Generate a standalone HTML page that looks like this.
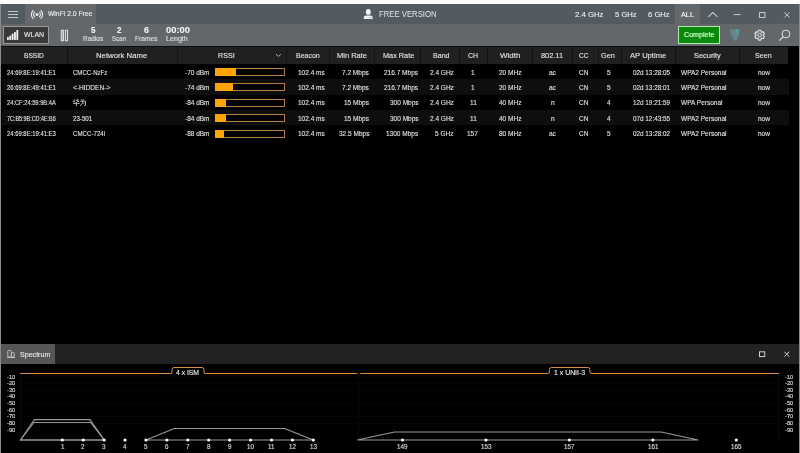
<!DOCTYPE html>
<html><head><meta charset="utf-8"><style>
html,body{margin:0;padding:0;}
body{width:800px;height:453px;overflow:hidden;background:#000;position:relative;font-family:"Liberation Sans",sans-serif;}
</style></head><body>
<div style="position:absolute;left:0;top:0;width:800px;height:453px">
<div style="position:absolute;left:-6px;top:-6px;width:812px;height:10px;background:#fbfbfb;"></div>
<div style="position:absolute;left:0px;top:4px;width:800px;height:20px;background:#535a60;"></div>
<div style="position:absolute;left:1px;top:4px;width:23.5px;height:20px;background:#525b60;"></div>
<div style="position:absolute;left:24.5px;top:4px;width:71.5px;height:20px;background:#65686a;"></div>
<div style="position:absolute;left:675px;top:4px;width:25px;height:20px;background:#65686a;"></div>
<div style="position:absolute;left:0px;top:24px;width:800px;height:22px;background:#63676a;"></div>
<div style="position:absolute;left:1px;top:46px;width:787px;height:18px;background:#202020;"></div>
<div style="position:absolute;left:1px;top:46px;width:787px;height:1px;background:#0c0c0c;"></div>
<div style="position:absolute;left:2px;top:79.35px;width:787px;height:15.35px;background:#0e0e0e;"></div>
<div style="position:absolute;left:2px;top:110.05px;width:787px;height:15.35px;background:#0e0e0e;"></div>
<div style="position:absolute;left:-6px;top:4px;width:7px;height:455px;background:#8c8c8c;"></div>
<div style="position:absolute;left:799px;top:4px;width:7px;height:455px;background:#8c8c8c;"></div>
<div style="position:absolute;left:67px;top:47px;width:1px;height:17px;background:#141414;"></div>
<div style="position:absolute;left:176.5px;top:47px;width:1px;height:17px;background:#141414;"></div>
<div style="position:absolute;left:285.5px;top:47px;width:1px;height:17px;background:#141414;"></div>
<div style="position:absolute;left:329px;top:47px;width:1px;height:17px;background:#141414;"></div>
<div style="position:absolute;left:374px;top:47px;width:1px;height:17px;background:#141414;"></div>
<div style="position:absolute;left:420px;top:47px;width:1px;height:17px;background:#141414;"></div>
<div style="position:absolute;left:459px;top:47px;width:1px;height:17px;background:#141414;"></div>
<div style="position:absolute;left:487px;top:47px;width:1px;height:17px;background:#141414;"></div>
<div style="position:absolute;left:532px;top:47px;width:1px;height:17px;background:#141414;"></div>
<div style="position:absolute;left:572px;top:47px;width:1px;height:17px;background:#141414;"></div>
<div style="position:absolute;left:597.5px;top:47px;width:1px;height:17px;background:#141414;"></div>
<div style="position:absolute;left:621.25px;top:47px;width:1px;height:17px;background:#141414;"></div>
<div style="position:absolute;left:675px;top:47px;width:1px;height:17px;background:#141414;"></div>
<div style="position:absolute;left:738.75px;top:47px;width:1px;height:17px;background:#141414;"></div>
<div style="position:absolute;left:2.75px;top:26px;width:46.5px;height:18px;background:#393939;box-sizing:border-box;border:1px solid #9a9a9a;"></div>
<div style="position:absolute;left:678px;top:26px;width:41.6px;height:18px;background:#0b890b;box-sizing:border-box;border:1px solid #b0ecb0;"></div>
<div style="position:absolute;left:215px;top:68.1px;width:70px;height:8px;background:#000;box-sizing:border-box;border:1px solid #b4803c;"></div>
<div style="position:absolute;left:215px;top:68.1px;width:21px;height:8px;background:#ffa204;"></div>
<div style="position:absolute;left:215px;top:83.44999999999999px;width:70px;height:8px;background:#000;box-sizing:border-box;border:1px solid #b4803c;"></div>
<div style="position:absolute;left:215px;top:83.44999999999999px;width:18.4px;height:8px;background:#ffa204;"></div>
<div style="position:absolute;left:215px;top:98.8px;width:70px;height:8px;background:#000;box-sizing:border-box;border:1px solid #b4803c;"></div>
<div style="position:absolute;left:215px;top:98.8px;width:11.4px;height:8px;background:#ffa204;"></div>
<div style="position:absolute;left:215px;top:114.14999999999999px;width:70px;height:8px;background:#000;box-sizing:border-box;border:1px solid #b4803c;"></div>
<div style="position:absolute;left:215px;top:114.14999999999999px;width:11.4px;height:8px;background:#ffa204;"></div>
<div style="position:absolute;left:215px;top:129.5px;width:70px;height:8px;background:#000;box-sizing:border-box;border:1px solid #b4803c;"></div>
<div style="position:absolute;left:215px;top:129.5px;width:8.8px;height:8px;background:#ffa204;"></div>
<div style="position:absolute;left:1px;top:344px;width:797.5px;height:19.5px;background:#222222;"></div>
<div style="position:absolute;left:1px;top:344px;width:54px;height:19.5px;background:#565656;"></div>
<svg style="position:absolute;left:0;top:0" width="800" height="453" viewBox="0 0 800 453"><line x1="8.1" y1="11.5" x2="18" y2="11.5" stroke="#c4cacd" stroke-width="1"/><line x1="8.1" y1="14.5" x2="18" y2="14.5" stroke="#c4cacd" stroke-width="1"/><line x1="8.1" y1="17.5" x2="18" y2="17.5" stroke="#c4cacd" stroke-width="1"/><circle cx="37" cy="14.5" r="1.5" fill="#e8e8e8"/><path d="M39.19,11.90 A3.4,3.4 0 0 1 39.19,17.10" fill="none" stroke="#f0f0f0" stroke-width="1.1"/><path d="M34.81,11.90 A3.4,3.4 0 0 0 34.81,17.10" fill="none" stroke="#f0f0f0" stroke-width="1.1"/><path d="M40.60,10.21 A5.6,5.6 0 0 1 40.60,18.79" fill="none" stroke="#f0f0f0" stroke-width="1.1"/><path d="M33.40,10.21 A5.6,5.6 0 0 0 33.40,18.79" fill="none" stroke="#f0f0f0" stroke-width="1.1"/><ellipse cx="368.3" cy="11.9" rx="2.5" ry="2.9" fill="#f2f2f2"/><path d="M363.8,19 L363.8,17.6 Q363.8,15.4 366.3,15.4 L370.3,15.4 Q372.7,15.4 372.7,17.6 L372.7,19 Z" fill="#f2f2f2"/><rect x="369.8" y="17.1" width="1.8" height="1" fill="#9a9ea2"/><polyline points="708.3,16.8 712.8,12.6 717.4,16.8" fill="none" stroke="#c4cacd" stroke-width="1.1"/><line x1="733.7" y1="14.6" x2="740.7" y2="14.6" stroke="#c4cacd" stroke-width="1"/><rect x="759.5" y="12.5" width="5.4" height="5" fill="none" stroke="#c4cacd" stroke-width="1"/><path d="M784.3,12.3 L789.5,17.5 M789.5,12.3 L784.3,17.5" stroke="#c4cacd" stroke-width="1"/><rect x="7" y="37.1" width="1.8" height="2.80" fill="#f4f4f4"/><rect x="9.35" y="35.7" width="1.8" height="4.20" fill="#f4f4f4"/><rect x="11.7" y="33.7" width="1.8" height="6.20" fill="#f4f4f4"/><rect x="14.05" y="32.1" width="1.8" height="7.80" fill="#f4f4f4"/><rect x="16.4" y="30" width="1.8" height="9.90" fill="#f4f4f4"/><rect x="61.3" y="30.3" width="2.1" height="10.4" fill="#9a9b9c" stroke="#e6e6e6" stroke-width="1"/><rect x="65.4" y="30.3" width="2.1" height="10.4" fill="none" stroke="#e6e6e6" stroke-width="1"/><path d="M730,29.3 L739.3,29.3 C739.3,34 737.6,41 735.3,41 C733,41 730,34 730,29.3 Z" fill="#62b2b5" fill-opacity="0.42"/><line x1="735.5" y1="29.5" x2="735.5" y2="39.5" stroke="#3f9ea2" stroke-width="1.2"/><path d="M736,29.3 L739.3,29.3 C739.3,31 739,33 738.5,34 L736,34 Z" fill="#52b8bb" fill-opacity="0.45"/><polygon points="758.56,30.31 760.64,30.31 761.35,32.17 763.32,31.85 764.36,33.65 763.10,35.20 764.36,36.75 763.32,38.55 761.35,38.23 760.64,40.09 758.56,40.09 757.85,38.23 755.88,38.55 754.84,36.75 756.10,35.20 754.84,33.65 755.88,31.85 757.85,32.17" fill="none" stroke="#e6e6e6" stroke-width="1.1" stroke-linejoin="round"/><circle cx="759.6" cy="35.2" r="1.8" fill="none" stroke="#e6e6e6" stroke-width="1"/><circle cx="785.9" cy="34" r="3.9" fill="none" stroke="#e2e2e2" stroke-width="1"/><line x1="783.1" y1="36.9" x2="779.2" y2="40.6" stroke="#e2e2e2" stroke-width="1.1"/><rect x="7.8" y="350.4" width="3.6" height="6.6" rx="1" fill="none" stroke="#c8c8c8" stroke-width="0.9"/><rect x="11.4" y="352.5" width="2.9" height="4.5" rx="1" fill="none" stroke="#c8c8c8" stroke-width="0.9"/><line x1="7" y1="357.6" x2="15" y2="357.6" stroke="#c8c8c8" stroke-width="0.9"/><rect x="759.5" y="351.8" width="5.2" height="4.8" fill="none" stroke="#d0d0d0" stroke-width="1"/><path d="M784.3,351.7 L789.3,356.7 M789.3,351.7 L784.3,356.7" stroke="#d0d0d0" stroke-width="1"/><polyline points="276,54.2 278.4,56.4 280.8,54.2" fill="none" stroke="#b0b0b0" stroke-width="1"/><path d="M74.9,99.3 L73.3,101.8 M74.2,100.8 L74.2,102.5 M76.2,100.6 L78.6,99.9 M77.4,99.2 L77.4,101.5 L79.3,101.5 M73.1,103.4 L79.7,103.4 M76.4,102.2 L76.4,106.1" fill="none" stroke="#d6d6d6" stroke-width="0.85"/><path d="M81.2,99.3 L81.8,100.2 M80.2,101.2 L85.6,101.2 L85.3,105.5 L84.3,105.8 M83.2,99.1 L82.6,102.8 L80.1,105.9 M83.4,103 L84.1,103.9" fill="none" stroke="#d6d6d6" stroke-width="0.85"/><line x1="20" y1="377.00" x2="357" y2="377.00" stroke="#070707" stroke-width="1"/><line x1="360.5" y1="377.00" x2="778" y2="377.00" stroke="#070707" stroke-width="1"/><line x1="20" y1="383.63" x2="357" y2="383.63" stroke="#070707" stroke-width="1"/><line x1="360.5" y1="383.63" x2="778" y2="383.63" stroke="#070707" stroke-width="1"/><line x1="20" y1="390.26" x2="357" y2="390.26" stroke="#070707" stroke-width="1"/><line x1="360.5" y1="390.26" x2="778" y2="390.26" stroke="#070707" stroke-width="1"/><line x1="20" y1="396.89" x2="357" y2="396.89" stroke="#070707" stroke-width="1"/><line x1="360.5" y1="396.89" x2="778" y2="396.89" stroke="#070707" stroke-width="1"/><line x1="20" y1="403.52" x2="357" y2="403.52" stroke="#070707" stroke-width="1"/><line x1="360.5" y1="403.52" x2="778" y2="403.52" stroke="#070707" stroke-width="1"/><line x1="20" y1="410.15" x2="357" y2="410.15" stroke="#070707" stroke-width="1"/><line x1="360.5" y1="410.15" x2="778" y2="410.15" stroke="#070707" stroke-width="1"/><line x1="20" y1="416.78" x2="357" y2="416.78" stroke="#070707" stroke-width="1"/><line x1="360.5" y1="416.78" x2="778" y2="416.78" stroke="#070707" stroke-width="1"/><line x1="20" y1="423.41" x2="357" y2="423.41" stroke="#070707" stroke-width="1"/><line x1="360.5" y1="423.41" x2="778" y2="423.41" stroke="#070707" stroke-width="1"/><line x1="20" y1="430.04" x2="357" y2="430.04" stroke="#070707" stroke-width="1"/><line x1="360.5" y1="430.04" x2="778" y2="430.04" stroke="#070707" stroke-width="1"/><line x1="20.5" y1="373" x2="20.5" y2="440" stroke="#0b0b0b" stroke-width="1"/><line x1="358.5" y1="373" x2="358.5" y2="440" stroke="#0b0b0b" stroke-width="1"/><line x1="778.5" y1="373" x2="778.5" y2="440" stroke="#0b0b0b" stroke-width="1"/><path d="M20,373.5 L171,373.5 Q172,373.5 172,372 L172,369.5 Q172,367.5 174,367.5 L202,367.5 Q204,367.5 204,369.5 L204,372 Q204,373.5 205,373.5 L357.3,373.5" fill="none" stroke="#d88c40" stroke-width="1"/><path d="M360.3,373.5 L548.4,373.5 Q549.4,373.5 549.4,372 L549.4,369.5 Q549.4,367.5 551.4,367.5 L587.9,367.5 Q589.9,367.5 589.9,369.5 L589.9,372 Q589.9,373.5 590.9,373.5 L779,373.5" fill="none" stroke="#d88c40" stroke-width="1"/><polygon points="20.5,440 34.4,419.6 90,419.6 104.2,440" fill="none" stroke="#9a9a9a" stroke-width="1.1"/><polygon points="20.5,440 33.8,422.5 90.6,422.5 104.2,440" fill="none" stroke="#9a9a9a" stroke-width="1.1"/><polygon points="146,440 174.2,428.5 284.6,428.5 313.3,440" fill="none" stroke="#9a9a9a" stroke-width="1.1"/><polygon points="357.3,440 394.4,432 661.1,432 698.3,440" fill="none" stroke="#9a9a9a" stroke-width="1.1"/><circle cx="62.30" cy="440" r="1.6" fill="#ffffff"/><circle cx="83.22" cy="440" r="1.6" fill="#ffffff"/><circle cx="104.14" cy="440" r="1.6" fill="#ffffff"/><circle cx="125.06" cy="440" r="1.6" fill="#ffffff"/><circle cx="145.98" cy="440" r="1.6" fill="#ffffff"/><circle cx="166.90" cy="440" r="1.6" fill="#ffffff"/><circle cx="187.82" cy="440" r="1.6" fill="#ffffff"/><circle cx="208.74" cy="440" r="1.6" fill="#ffffff"/><circle cx="229.66" cy="440" r="1.6" fill="#ffffff"/><circle cx="250.58" cy="440" r="1.6" fill="#ffffff"/><circle cx="271.50" cy="440" r="1.6" fill="#ffffff"/><circle cx="292.42" cy="440" r="1.6" fill="#ffffff"/><circle cx="313.34" cy="440" r="1.6" fill="#ffffff"/><circle cx="402.50" cy="440" r="1.6" fill="#ffffff"/><circle cx="485.95" cy="440" r="1.6" fill="#ffffff"/><circle cx="569.40" cy="440" r="1.6" fill="#ffffff"/><circle cx="652.85" cy="440" r="1.6" fill="#ffffff"/><circle cx="736.30" cy="440" r="1.6" fill="#ffffff"/></svg>
<div style="position:absolute;left:0;top:0;width:800px;height:453px;will-change:transform">
<div style="position:absolute;left:47.50px;top:11.36px;font:400 6.5px/1 'Liberation Sans',sans-serif;color:#f0f0f0;white-space:pre;-webkit-text-stroke:0.1px #f0f0f0;transform-origin:0 0;transform:scaleX(1.039)">WinFi 2.0 Free</div>
<div style="position:absolute;left:379.40px;top:8.90px;font:400 9.4px/1 'Liberation Sans',sans-serif;color:#e4e6e8;white-space:pre;-webkit-text-stroke:0px #e4e6e8;transform-origin:0 0;transform:scaleX(0.824)">FREE VERSION</div>
<div style="position:absolute;left:574.70px;top:10.85px;font:400 7.8px/1 'Liberation Sans',sans-serif;color:#f0f0f0;white-space:pre;-webkit-text-stroke:0.1px #f0f0f0;transform-origin:0 0;transform:scaleX(0.996)">2.4 GHz</div>
<div style="position:absolute;left:614.50px;top:10.85px;font:400 7.8px/1 'Liberation Sans',sans-serif;color:#f0f0f0;white-space:pre;-webkit-text-stroke:0.1px #f0f0f0;transform-origin:0 0;transform:scaleX(0.981)">5 GHz</div>
<div style="position:absolute;left:647.50px;top:10.85px;font:400 7.8px/1 'Liberation Sans',sans-serif;color:#f0f0f0;white-space:pre;-webkit-text-stroke:0.1px #f0f0f0;transform-origin:0 0;transform:scaleX(0.981)">6 GHz</div>
<div style="position:absolute;left:681.40px;top:10.85px;font:400 7.8px/1 'Liberation Sans',sans-serif;color:#ffffff;white-space:pre;-webkit-text-stroke:0.1px #ffffff;transform-origin:0 0;transform:scaleX(0.937)">ALL</div>
<div style="position:absolute;left:23.75px;top:31.15px;font:400 7.8px/1 'Liberation Sans',sans-serif;color:#f0f0f0;white-space:pre;-webkit-text-stroke:0.1px #f0f0f0;transform-origin:0 0;transform:scaleX(0.888)">WLAN</div>
<div style="position:absolute;left:90.50px;top:27.29px;font:700 8.2px/1 'Liberation Sans',sans-serif;color:#f4f4f4;white-space:pre;-webkit-text-stroke:0.1px #f4f4f4;transform-origin:0 0;transform:scaleX(0.986)">5</div>
<div style="position:absolute;left:83.00px;top:36.21px;font:400 6.8px/1 'Liberation Sans',sans-serif;color:#e0e0e0;white-space:pre;-webkit-text-stroke:0.1px #e0e0e0;transform-origin:0 0;transform:scaleX(0.954)">Radios</div>
<div style="position:absolute;left:116.70px;top:27.29px;font:700 8.2px/1 'Liberation Sans',sans-serif;color:#f4f4f4;white-space:pre;-webkit-text-stroke:0.1px #f4f4f4;transform-origin:0 0;transform:scaleX(0.986)">2</div>
<div style="position:absolute;left:111.50px;top:36.21px;font:400 6.8px/1 'Liberation Sans',sans-serif;color:#e0e0e0;white-space:pre;-webkit-text-stroke:0.1px #e0e0e0;transform-origin:0 0;transform:scaleX(0.916)">Scan</div>
<div style="position:absolute;left:143.70px;top:27.29px;font:700 8.2px/1 'Liberation Sans',sans-serif;color:#f4f4f4;white-space:pre;-webkit-text-stroke:0.1px #f4f4f4;transform-origin:0 0;transform:scaleX(1.096)">6</div>
<div style="position:absolute;left:134.70px;top:36.21px;font:400 6.8px/1 'Liberation Sans',sans-serif;color:#e0e0e0;white-space:pre;-webkit-text-stroke:0.1px #e0e0e0;transform-origin:0 0;transform:scaleX(0.976)">Frames</div>
<div style="position:absolute;left:165.50px;top:27.29px;font:700 8.2px/1 'Liberation Sans',sans-serif;color:#f4f4f4;white-space:pre;-webkit-text-stroke:0.1px #f4f4f4;transform-origin:0 0;transform:scaleX(1.141)">00:00</div>
<div style="position:absolute;left:166.20px;top:36.21px;font:400 6.8px/1 'Liberation Sans',sans-serif;color:#e0e0e0;white-space:pre;-webkit-text-stroke:0.1px #e0e0e0;transform-origin:0 0;transform:scaleX(1.048)">Length</div>
<div style="position:absolute;left:683.80px;top:30.95px;font:400 7.8px/1 'Liberation Sans',sans-serif;color:#c8ffc8;white-space:pre;-webkit-text-stroke:0.2px #c8ffc8;transform-origin:0 0;transform:scaleX(0.914)">Complete</div>
<div style="position:absolute;left:24.30px;top:51.85px;font:400 7.8px/1 'Liberation Sans',sans-serif;color:#e8e8e8;white-space:pre;-webkit-text-stroke:0.1px #e8e8e8;transform-origin:0 0;transform:scaleX(0.850)">BSSID</div>
<div style="position:absolute;left:95.90px;top:51.85px;font:400 7.8px/1 'Liberation Sans',sans-serif;color:#e8e8e8;white-space:pre;-webkit-text-stroke:0.1px #e8e8e8;transform-origin:0 0;transform:scaleX(0.993)">Network Name</div>
<div style="position:absolute;left:218.10px;top:51.85px;font:400 7.8px/1 'Liberation Sans',sans-serif;color:#e8e8e8;white-space:pre;-webkit-text-stroke:0.1px #e8e8e8;transform-origin:0 0;transform:scaleX(0.917)">RSSI</div>
<div style="position:absolute;left:296.25px;top:51.85px;font:400 7.8px/1 'Liberation Sans',sans-serif;color:#e8e8e8;white-space:pre;-webkit-text-stroke:0.1px #e8e8e8;transform-origin:0 0;transform:scaleX(0.898)">Beacon</div>
<div style="position:absolute;left:337.00px;top:51.85px;font:400 7.8px/1 'Liberation Sans',sans-serif;color:#e8e8e8;white-space:pre;-webkit-text-stroke:0.1px #e8e8e8;transform-origin:0 0;transform:scaleX(0.961)">Min Rate</div>
<div style="position:absolute;left:383.00px;top:51.85px;font:400 7.8px/1 'Liberation Sans',sans-serif;color:#e8e8e8;white-space:pre;-webkit-text-stroke:0.1px #e8e8e8;transform-origin:0 0;transform:scaleX(0.936)">Max Rate</div>
<div style="position:absolute;left:433.00px;top:51.85px;font:400 7.8px/1 'Liberation Sans',sans-serif;color:#e8e8e8;white-space:pre;-webkit-text-stroke:0.1px #e8e8e8;transform-origin:0 0;transform:scaleX(0.906)">Band</div>
<div style="position:absolute;left:467.50px;top:51.85px;font:400 7.8px/1 'Liberation Sans',sans-serif;color:#e8e8e8;white-space:pre;-webkit-text-stroke:0.1px #e8e8e8;transform-origin:0 0;transform:scaleX(0.888)">CH</div>
<div style="position:absolute;left:499.50px;top:51.85px;font:400 7.8px/1 'Liberation Sans',sans-serif;color:#e8e8e8;white-space:pre;-webkit-text-stroke:0.1px #e8e8e8;transform-origin:0 0;transform:scaleX(1.028)">Width</div>
<div style="position:absolute;left:540.50px;top:51.85px;font:400 7.8px/1 'Liberation Sans',sans-serif;color:#e8e8e8;white-space:pre;-webkit-text-stroke:0.1px #e8e8e8;transform-origin:0 0;transform:scaleX(0.945)">802.11</div>
<div style="position:absolute;left:578.75px;top:51.85px;font:400 7.8px/1 'Liberation Sans',sans-serif;color:#e8e8e8;white-space:pre;-webkit-text-stroke:0.1px #e8e8e8;transform-origin:0 0;transform:scaleX(0.843)">CC</div>
<div style="position:absolute;left:601.25px;top:51.85px;font:400 7.8px/1 'Liberation Sans',sans-serif;color:#e8e8e8;white-space:pre;-webkit-text-stroke:0.1px #e8e8e8;transform-origin:0 0;transform:scaleX(0.932)">Gen</div>
<div style="position:absolute;left:630.00px;top:51.85px;font:400 7.8px/1 'Liberation Sans',sans-serif;color:#e8e8e8;white-space:pre;-webkit-text-stroke:0.1px #e8e8e8;transform-origin:0 0;transform:scaleX(0.976)">AP Uptime</div>
<div style="position:absolute;left:693.75px;top:51.85px;font:400 7.8px/1 'Liberation Sans',sans-serif;color:#e8e8e8;white-space:pre;-webkit-text-stroke:0.1px #e8e8e8;transform-origin:0 0;transform:scaleX(0.950)">Security</div>
<div style="position:absolute;left:754.50px;top:51.85px;font:400 7.8px/1 'Liberation Sans',sans-serif;color:#e8e8e8;white-space:pre;-webkit-text-stroke:0.1px #e8e8e8;transform-origin:0 0;transform:scaleX(0.919)">Seen</div>
<div style="position:absolute;left:6.75px;top:68.58px;font:400 7.0px/1 'Liberation Sans',sans-serif;color:#e6e6e6;white-space:pre;-webkit-text-stroke:0.1px #e6e6e6;transform-origin:0 0;transform:scaleX(0.841)">24:69:8E:19:41:E1</div>
<div style="position:absolute;left:72.90px;top:68.58px;font:400 7.0px/1 'Liberation Sans',sans-serif;color:#e6e6e6;white-space:pre;-webkit-text-stroke:0.1px #e6e6e6;transform-origin:0 0;transform:scaleX(0.865)">CMCC-NzFz</div>
<div style="position:absolute;left:185.30px;top:68.58px;font:400 7.0px/1 'Liberation Sans',sans-serif;color:#e6e6e6;white-space:pre;-webkit-text-stroke:0.1px #e6e6e6;transform-origin:0 0;transform:scaleX(0.926)">-70 dBm</div>
<div style="position:absolute;left:298.12px;top:68.58px;font:400 7.0px/1 'Liberation Sans',sans-serif;color:#e6e6e6;white-space:pre;-webkit-text-stroke:0.1px #e6e6e6;transform-origin:0 0;transform:scaleX(0.930)">102.4 ms</div>
<div style="position:absolute;left:342.42px;top:68.58px;font:400 7.0px/1 'Liberation Sans',sans-serif;color:#e6e6e6;white-space:pre;-webkit-text-stroke:0.1px #e6e6e6;transform-origin:0 0;transform:scaleX(0.930)">7.2 Mbps</div>
<div style="position:absolute;left:384.37px;top:68.58px;font:400 7.0px/1 'Liberation Sans',sans-serif;color:#e6e6e6;white-space:pre;-webkit-text-stroke:0.1px #e6e6e6;transform-origin:0 0;transform:scaleX(0.930)">216.7 Mbps</div>
<div style="position:absolute;left:430.01px;top:68.58px;font:400 7.0px/1 'Liberation Sans',sans-serif;color:#e6e6e6;white-space:pre;-webkit-text-stroke:0.1px #e6e6e6;transform-origin:0 0;transform:scaleX(0.930)">2.4 GHz</div>
<div style="position:absolute;left:471.08px;top:68.58px;font:400 7.0px/1 'Liberation Sans',sans-serif;color:#e6e6e6;white-space:pre;-webkit-text-stroke:0.1px #e6e6e6;transform-origin:0 0;transform:scaleX(0.930)">1</div>
<div style="position:absolute;left:498.78px;top:68.58px;font:400 7.0px/1 'Liberation Sans',sans-serif;color:#e6e6e6;white-space:pre;-webkit-text-stroke:0.1px #e6e6e6;transform-origin:0 0;transform:scaleX(0.930)">20 MHz</div>
<div style="position:absolute;left:549.06px;top:68.58px;font:400 7.0px/1 'Liberation Sans',sans-serif;color:#e6e6e6;white-space:pre;-webkit-text-stroke:0.1px #e6e6e6;transform-origin:0 0;transform:scaleX(0.930)">ac</div>
<div style="position:absolute;left:578.99px;top:68.58px;font:400 7.0px/1 'Liberation Sans',sans-serif;color:#e6e6e6;white-space:pre;-webkit-text-stroke:0.1px #e6e6e6;transform-origin:0 0;transform:scaleX(0.930)">CN</div>
<div style="position:absolute;left:606.68px;top:68.58px;font:400 7.0px/1 'Liberation Sans',sans-serif;color:#e6e6e6;white-space:pre;-webkit-text-stroke:0.1px #e6e6e6;transform-origin:0 0;transform:scaleX(0.930)">5</div>
<div style="position:absolute;left:633.00px;top:68.58px;font:400 7.0px/1 'Liberation Sans',sans-serif;color:#e6e6e6;white-space:pre;-webkit-text-stroke:0.1px #e6e6e6;transform-origin:0 0;transform:scaleX(0.905)">02d 13:28:05</div>
<div style="position:absolute;left:681.30px;top:68.58px;font:400 7.0px/1 'Liberation Sans',sans-serif;color:#e6e6e6;white-space:pre;-webkit-text-stroke:0.1px #e6e6e6;transform-origin:0 0;transform:scaleX(0.930)">WPA2 Personal</div>
<div style="position:absolute;left:757.63px;top:68.58px;font:400 7.0px/1 'Liberation Sans',sans-serif;color:#e6e6e6;white-space:pre;-webkit-text-stroke:0.1px #e6e6e6;transform-origin:0 0;transform:scaleX(0.930)">now</div>
<div style="position:absolute;left:6.75px;top:83.93px;font:400 7.0px/1 'Liberation Sans',sans-serif;color:#e6e6e6;white-space:pre;-webkit-text-stroke:0.1px #e6e6e6;transform-origin:0 0;transform:scaleX(0.841)">26:69:8E:49:41:E1</div>
<div style="position:absolute;left:72.90px;top:83.93px;font:400 7.0px/1 'Liberation Sans',sans-serif;color:#e6e6e6;white-space:pre;-webkit-text-stroke:0.1px #e6e6e6;transform-origin:0 0;transform:scaleX(0.940)">&lt;-HIDDEN-&gt;</div>
<div style="position:absolute;left:185.30px;top:83.93px;font:400 7.0px/1 'Liberation Sans',sans-serif;color:#e6e6e6;white-space:pre;-webkit-text-stroke:0.1px #e6e6e6;transform-origin:0 0;transform:scaleX(0.926)">-74 dBm</div>
<div style="position:absolute;left:298.12px;top:83.93px;font:400 7.0px/1 'Liberation Sans',sans-serif;color:#e6e6e6;white-space:pre;-webkit-text-stroke:0.1px #e6e6e6;transform-origin:0 0;transform:scaleX(0.930)">102.4 ms</div>
<div style="position:absolute;left:342.42px;top:83.93px;font:400 7.0px/1 'Liberation Sans',sans-serif;color:#e6e6e6;white-space:pre;-webkit-text-stroke:0.1px #e6e6e6;transform-origin:0 0;transform:scaleX(0.930)">7.2 Mbps</div>
<div style="position:absolute;left:384.37px;top:83.93px;font:400 7.0px/1 'Liberation Sans',sans-serif;color:#e6e6e6;white-space:pre;-webkit-text-stroke:0.1px #e6e6e6;transform-origin:0 0;transform:scaleX(0.930)">216.7 Mbps</div>
<div style="position:absolute;left:430.01px;top:83.93px;font:400 7.0px/1 'Liberation Sans',sans-serif;color:#e6e6e6;white-space:pre;-webkit-text-stroke:0.1px #e6e6e6;transform-origin:0 0;transform:scaleX(0.930)">2.4 GHz</div>
<div style="position:absolute;left:471.08px;top:83.93px;font:400 7.0px/1 'Liberation Sans',sans-serif;color:#e6e6e6;white-space:pre;-webkit-text-stroke:0.1px #e6e6e6;transform-origin:0 0;transform:scaleX(0.930)">1</div>
<div style="position:absolute;left:498.78px;top:83.93px;font:400 7.0px/1 'Liberation Sans',sans-serif;color:#e6e6e6;white-space:pre;-webkit-text-stroke:0.1px #e6e6e6;transform-origin:0 0;transform:scaleX(0.930)">20 MHz</div>
<div style="position:absolute;left:549.06px;top:83.93px;font:400 7.0px/1 'Liberation Sans',sans-serif;color:#e6e6e6;white-space:pre;-webkit-text-stroke:0.1px #e6e6e6;transform-origin:0 0;transform:scaleX(0.930)">ac</div>
<div style="position:absolute;left:578.99px;top:83.93px;font:400 7.0px/1 'Liberation Sans',sans-serif;color:#e6e6e6;white-space:pre;-webkit-text-stroke:0.1px #e6e6e6;transform-origin:0 0;transform:scaleX(0.930)">CN</div>
<div style="position:absolute;left:606.68px;top:83.93px;font:400 7.0px/1 'Liberation Sans',sans-serif;color:#e6e6e6;white-space:pre;-webkit-text-stroke:0.1px #e6e6e6;transform-origin:0 0;transform:scaleX(0.930)">5</div>
<div style="position:absolute;left:633.00px;top:83.93px;font:400 7.0px/1 'Liberation Sans',sans-serif;color:#e6e6e6;white-space:pre;-webkit-text-stroke:0.1px #e6e6e6;transform-origin:0 0;transform:scaleX(0.905)">02d 13:28:01</div>
<div style="position:absolute;left:681.30px;top:83.93px;font:400 7.0px/1 'Liberation Sans',sans-serif;color:#e6e6e6;white-space:pre;-webkit-text-stroke:0.1px #e6e6e6;transform-origin:0 0;transform:scaleX(0.930)">WPA2 Personal</div>
<div style="position:absolute;left:757.63px;top:83.93px;font:400 7.0px/1 'Liberation Sans',sans-serif;color:#e6e6e6;white-space:pre;-webkit-text-stroke:0.1px #e6e6e6;transform-origin:0 0;transform:scaleX(0.930)">now</div>
<div style="position:absolute;left:6.75px;top:99.28px;font:400 7.0px/1 'Liberation Sans',sans-serif;color:#e6e6e6;white-space:pre;-webkit-text-stroke:0.1px #e6e6e6;transform-origin:0 0;transform:scaleX(0.819)">24:CF:24:59:9B:4A</div>
<div style="position:absolute;left:185.30px;top:99.28px;font:400 7.0px/1 'Liberation Sans',sans-serif;color:#e6e6e6;white-space:pre;-webkit-text-stroke:0.1px #e6e6e6;transform-origin:0 0;transform:scaleX(0.926)">-84 dBm</div>
<div style="position:absolute;left:298.12px;top:99.28px;font:400 7.0px/1 'Liberation Sans',sans-serif;color:#e6e6e6;white-space:pre;-webkit-text-stroke:0.1px #e6e6e6;transform-origin:0 0;transform:scaleX(0.930)">102.4 ms</div>
<div style="position:absolute;left:344.22px;top:99.28px;font:400 7.0px/1 'Liberation Sans',sans-serif;color:#e6e6e6;white-space:pre;-webkit-text-stroke:0.1px #e6e6e6;transform-origin:0 0;transform:scaleX(0.930)">15 Mbps</div>
<div style="position:absolute;left:389.80px;top:99.28px;font:400 7.0px/1 'Liberation Sans',sans-serif;color:#e6e6e6;white-space:pre;-webkit-text-stroke:0.1px #e6e6e6;transform-origin:0 0;transform:scaleX(0.930)">300 Mbps</div>
<div style="position:absolute;left:430.01px;top:99.28px;font:400 7.0px/1 'Liberation Sans',sans-serif;color:#e6e6e6;white-space:pre;-webkit-text-stroke:0.1px #e6e6e6;transform-origin:0 0;transform:scaleX(0.930)">2.4 GHz</div>
<div style="position:absolute;left:469.51px;top:99.28px;font:400 7.0px/1 'Liberation Sans',sans-serif;color:#e6e6e6;white-space:pre;-webkit-text-stroke:0.1px #e6e6e6;transform-origin:0 0;transform:scaleX(0.930)">11</div>
<div style="position:absolute;left:498.78px;top:99.28px;font:400 7.0px/1 'Liberation Sans',sans-serif;color:#e6e6e6;white-space:pre;-webkit-text-stroke:0.1px #e6e6e6;transform-origin:0 0;transform:scaleX(0.930)">40 MHz</div>
<div style="position:absolute;left:550.68px;top:99.28px;font:400 7.0px/1 'Liberation Sans',sans-serif;color:#e6e6e6;white-space:pre;-webkit-text-stroke:0.1px #e6e6e6;transform-origin:0 0;transform:scaleX(0.930)">n</div>
<div style="position:absolute;left:578.99px;top:99.28px;font:400 7.0px/1 'Liberation Sans',sans-serif;color:#e6e6e6;white-space:pre;-webkit-text-stroke:0.1px #e6e6e6;transform-origin:0 0;transform:scaleX(0.930)">CN</div>
<div style="position:absolute;left:606.68px;top:99.28px;font:400 7.0px/1 'Liberation Sans',sans-serif;color:#e6e6e6;white-space:pre;-webkit-text-stroke:0.1px #e6e6e6;transform-origin:0 0;transform:scaleX(0.930)">4</div>
<div style="position:absolute;left:633.00px;top:99.28px;font:400 7.0px/1 'Liberation Sans',sans-serif;color:#e6e6e6;white-space:pre;-webkit-text-stroke:0.1px #e6e6e6;transform-origin:0 0;transform:scaleX(0.905)">12d 19:21:59</div>
<div style="position:absolute;left:681.30px;top:99.28px;font:400 7.0px/1 'Liberation Sans',sans-serif;color:#e6e6e6;white-space:pre;-webkit-text-stroke:0.1px #e6e6e6;transform-origin:0 0;transform:scaleX(0.930)">WPA Personal</div>
<div style="position:absolute;left:757.63px;top:99.28px;font:400 7.0px/1 'Liberation Sans',sans-serif;color:#e6e6e6;white-space:pre;-webkit-text-stroke:0.1px #e6e6e6;transform-origin:0 0;transform:scaleX(0.930)">now</div>
<div style="position:absolute;left:6.75px;top:114.63px;font:400 7.0px/1 'Liberation Sans',sans-serif;color:#e6e6e6;white-space:pre;-webkit-text-stroke:0.1px #e6e6e6;transform-origin:0 0;transform:scaleX(0.773)">7C:B5:9B:CD:4E:B6</div>
<div style="position:absolute;left:72.90px;top:114.63px;font:400 7.0px/1 'Liberation Sans',sans-serif;color:#e6e6e6;white-space:pre;-webkit-text-stroke:0.1px #e6e6e6;transform-origin:0 0;transform:scaleX(0.881)">23-501</div>
<div style="position:absolute;left:185.30px;top:114.63px;font:400 7.0px/1 'Liberation Sans',sans-serif;color:#e6e6e6;white-space:pre;-webkit-text-stroke:0.1px #e6e6e6;transform-origin:0 0;transform:scaleX(0.926)">-84 dBm</div>
<div style="position:absolute;left:298.12px;top:114.63px;font:400 7.0px/1 'Liberation Sans',sans-serif;color:#e6e6e6;white-space:pre;-webkit-text-stroke:0.1px #e6e6e6;transform-origin:0 0;transform:scaleX(0.930)">102.4 ms</div>
<div style="position:absolute;left:344.22px;top:114.63px;font:400 7.0px/1 'Liberation Sans',sans-serif;color:#e6e6e6;white-space:pre;-webkit-text-stroke:0.1px #e6e6e6;transform-origin:0 0;transform:scaleX(0.930)">15 Mbps</div>
<div style="position:absolute;left:389.80px;top:114.63px;font:400 7.0px/1 'Liberation Sans',sans-serif;color:#e6e6e6;white-space:pre;-webkit-text-stroke:0.1px #e6e6e6;transform-origin:0 0;transform:scaleX(0.930)">300 Mbps</div>
<div style="position:absolute;left:430.01px;top:114.63px;font:400 7.0px/1 'Liberation Sans',sans-serif;color:#e6e6e6;white-space:pre;-webkit-text-stroke:0.1px #e6e6e6;transform-origin:0 0;transform:scaleX(0.930)">2.4 GHz</div>
<div style="position:absolute;left:469.51px;top:114.63px;font:400 7.0px/1 'Liberation Sans',sans-serif;color:#e6e6e6;white-space:pre;-webkit-text-stroke:0.1px #e6e6e6;transform-origin:0 0;transform:scaleX(0.930)">11</div>
<div style="position:absolute;left:498.78px;top:114.63px;font:400 7.0px/1 'Liberation Sans',sans-serif;color:#e6e6e6;white-space:pre;-webkit-text-stroke:0.1px #e6e6e6;transform-origin:0 0;transform:scaleX(0.930)">40 MHz</div>
<div style="position:absolute;left:550.68px;top:114.63px;font:400 7.0px/1 'Liberation Sans',sans-serif;color:#e6e6e6;white-space:pre;-webkit-text-stroke:0.1px #e6e6e6;transform-origin:0 0;transform:scaleX(0.930)">n</div>
<div style="position:absolute;left:578.99px;top:114.63px;font:400 7.0px/1 'Liberation Sans',sans-serif;color:#e6e6e6;white-space:pre;-webkit-text-stroke:0.1px #e6e6e6;transform-origin:0 0;transform:scaleX(0.930)">CN</div>
<div style="position:absolute;left:606.68px;top:114.63px;font:400 7.0px/1 'Liberation Sans',sans-serif;color:#e6e6e6;white-space:pre;-webkit-text-stroke:0.1px #e6e6e6;transform-origin:0 0;transform:scaleX(0.930)">4</div>
<div style="position:absolute;left:633.00px;top:114.63px;font:400 7.0px/1 'Liberation Sans',sans-serif;color:#e6e6e6;white-space:pre;-webkit-text-stroke:0.1px #e6e6e6;transform-origin:0 0;transform:scaleX(0.905)">07d 12:43:55</div>
<div style="position:absolute;left:681.30px;top:114.63px;font:400 7.0px/1 'Liberation Sans',sans-serif;color:#e6e6e6;white-space:pre;-webkit-text-stroke:0.1px #e6e6e6;transform-origin:0 0;transform:scaleX(0.930)">WPA2 Personal</div>
<div style="position:absolute;left:757.63px;top:114.63px;font:400 7.0px/1 'Liberation Sans',sans-serif;color:#e6e6e6;white-space:pre;-webkit-text-stroke:0.1px #e6e6e6;transform-origin:0 0;transform:scaleX(0.930)">now</div>
<div style="position:absolute;left:6.75px;top:129.98px;font:400 7.0px/1 'Liberation Sans',sans-serif;color:#e6e6e6;white-space:pre;-webkit-text-stroke:0.1px #e6e6e6;transform-origin:0 0;transform:scaleX(0.841)">24:69:8E:19:41:E3</div>
<div style="position:absolute;left:72.90px;top:129.98px;font:400 7.0px/1 'Liberation Sans',sans-serif;color:#e6e6e6;white-space:pre;-webkit-text-stroke:0.1px #e6e6e6;transform-origin:0 0;transform:scaleX(0.878)">CMCC-724i</div>
<div style="position:absolute;left:185.30px;top:129.98px;font:400 7.0px/1 'Liberation Sans',sans-serif;color:#e6e6e6;white-space:pre;-webkit-text-stroke:0.1px #e6e6e6;transform-origin:0 0;transform:scaleX(0.926)">-88 dBm</div>
<div style="position:absolute;left:298.12px;top:129.98px;font:400 7.0px/1 'Liberation Sans',sans-serif;color:#e6e6e6;white-space:pre;-webkit-text-stroke:0.1px #e6e6e6;transform-origin:0 0;transform:scaleX(0.930)">102.4 ms</div>
<div style="position:absolute;left:338.80px;top:129.98px;font:400 7.0px/1 'Liberation Sans',sans-serif;color:#e6e6e6;white-space:pre;-webkit-text-stroke:0.1px #e6e6e6;transform-origin:0 0;transform:scaleX(0.930)">32.5 Mbps</div>
<div style="position:absolute;left:386.18px;top:129.98px;font:400 7.0px/1 'Liberation Sans',sans-serif;color:#e6e6e6;white-space:pre;-webkit-text-stroke:0.1px #e6e6e6;transform-origin:0 0;transform:scaleX(0.930)">1300 Mbps</div>
<div style="position:absolute;left:435.45px;top:129.98px;font:400 7.0px/1 'Liberation Sans',sans-serif;color:#e6e6e6;white-space:pre;-webkit-text-stroke:0.1px #e6e6e6;transform-origin:0 0;transform:scaleX(0.930)">5 GHz</div>
<div style="position:absolute;left:467.47px;top:129.98px;font:400 7.0px/1 'Liberation Sans',sans-serif;color:#e6e6e6;white-space:pre;-webkit-text-stroke:0.1px #e6e6e6;transform-origin:0 0;transform:scaleX(0.930)">157</div>
<div style="position:absolute;left:498.78px;top:129.98px;font:400 7.0px/1 'Liberation Sans',sans-serif;color:#e6e6e6;white-space:pre;-webkit-text-stroke:0.1px #e6e6e6;transform-origin:0 0;transform:scaleX(0.930)">80 MHz</div>
<div style="position:absolute;left:549.06px;top:129.98px;font:400 7.0px/1 'Liberation Sans',sans-serif;color:#e6e6e6;white-space:pre;-webkit-text-stroke:0.1px #e6e6e6;transform-origin:0 0;transform:scaleX(0.930)">ac</div>
<div style="position:absolute;left:578.99px;top:129.98px;font:400 7.0px/1 'Liberation Sans',sans-serif;color:#e6e6e6;white-space:pre;-webkit-text-stroke:0.1px #e6e6e6;transform-origin:0 0;transform:scaleX(0.930)">CN</div>
<div style="position:absolute;left:606.68px;top:129.98px;font:400 7.0px/1 'Liberation Sans',sans-serif;color:#e6e6e6;white-space:pre;-webkit-text-stroke:0.1px #e6e6e6;transform-origin:0 0;transform:scaleX(0.930)">5</div>
<div style="position:absolute;left:633.00px;top:129.98px;font:400 7.0px/1 'Liberation Sans',sans-serif;color:#e6e6e6;white-space:pre;-webkit-text-stroke:0.1px #e6e6e6;transform-origin:0 0;transform:scaleX(0.905)">02d 13:28:02</div>
<div style="position:absolute;left:681.30px;top:129.98px;font:400 7.0px/1 'Liberation Sans',sans-serif;color:#e6e6e6;white-space:pre;-webkit-text-stroke:0.1px #e6e6e6;transform-origin:0 0;transform:scaleX(0.930)">WPA2 Personal</div>
<div style="position:absolute;left:757.63px;top:129.98px;font:400 7.0px/1 'Liberation Sans',sans-serif;color:#e6e6e6;white-space:pre;-webkit-text-stroke:0.1px #e6e6e6;transform-origin:0 0;transform:scaleX(0.930)">now</div>
<div style="position:absolute;left:19.50px;top:351.05px;font:400 7.2px/1 'Liberation Sans',sans-serif;color:#f0f0f0;white-space:pre;-webkit-text-stroke:0.1px #f0f0f0;transform-origin:0 0;transform:scaleX(0.985)">Spectrum</div>
<div style="position:absolute;left:60.56px;top:443.94px;font:400 6.6px/1 'Liberation Sans',sans-serif;color:#e0e0e0;white-space:pre;-webkit-text-stroke:0.1px #e0e0e0;transform-origin:0 0;transform:scaleX(0.950)">1</div>
<div style="position:absolute;left:81.48px;top:443.94px;font:400 6.6px/1 'Liberation Sans',sans-serif;color:#e0e0e0;white-space:pre;-webkit-text-stroke:0.1px #e0e0e0;transform-origin:0 0;transform:scaleX(0.950)">2</div>
<div style="position:absolute;left:102.40px;top:443.94px;font:400 6.6px/1 'Liberation Sans',sans-serif;color:#e0e0e0;white-space:pre;-webkit-text-stroke:0.1px #e0e0e0;transform-origin:0 0;transform:scaleX(0.950)">3</div>
<div style="position:absolute;left:123.32px;top:443.94px;font:400 6.6px/1 'Liberation Sans',sans-serif;color:#e0e0e0;white-space:pre;-webkit-text-stroke:0.1px #e0e0e0;transform-origin:0 0;transform:scaleX(0.950)">4</div>
<div style="position:absolute;left:144.24px;top:443.94px;font:400 6.6px/1 'Liberation Sans',sans-serif;color:#e0e0e0;white-space:pre;-webkit-text-stroke:0.1px #e0e0e0;transform-origin:0 0;transform:scaleX(0.950)">5</div>
<div style="position:absolute;left:165.16px;top:443.94px;font:400 6.6px/1 'Liberation Sans',sans-serif;color:#e0e0e0;white-space:pre;-webkit-text-stroke:0.1px #e0e0e0;transform-origin:0 0;transform:scaleX(0.950)">6</div>
<div style="position:absolute;left:186.08px;top:443.94px;font:400 6.6px/1 'Liberation Sans',sans-serif;color:#e0e0e0;white-space:pre;-webkit-text-stroke:0.1px #e0e0e0;transform-origin:0 0;transform:scaleX(0.950)">7</div>
<div style="position:absolute;left:207.00px;top:443.94px;font:400 6.6px/1 'Liberation Sans',sans-serif;color:#e0e0e0;white-space:pre;-webkit-text-stroke:0.1px #e0e0e0;transform-origin:0 0;transform:scaleX(0.950)">8</div>
<div style="position:absolute;left:227.92px;top:443.94px;font:400 6.6px/1 'Liberation Sans',sans-serif;color:#e0e0e0;white-space:pre;-webkit-text-stroke:0.1px #e0e0e0;transform-origin:0 0;transform:scaleX(0.950)">9</div>
<div style="position:absolute;left:247.09px;top:443.94px;font:400 6.6px/1 'Liberation Sans',sans-serif;color:#e0e0e0;white-space:pre;-webkit-text-stroke:0.1px #e0e0e0;transform-origin:0 0;transform:scaleX(0.950)">10</div>
<div style="position:absolute;left:268.24px;top:443.94px;font:400 6.6px/1 'Liberation Sans',sans-serif;color:#e0e0e0;white-space:pre;-webkit-text-stroke:0.1px #e0e0e0;transform-origin:0 0;transform:scaleX(0.950)">11</div>
<div style="position:absolute;left:288.93px;top:443.94px;font:400 6.6px/1 'Liberation Sans',sans-serif;color:#e0e0e0;white-space:pre;-webkit-text-stroke:0.1px #e0e0e0;transform-origin:0 0;transform:scaleX(0.950)">12</div>
<div style="position:absolute;left:309.85px;top:443.94px;font:400 6.6px/1 'Liberation Sans',sans-serif;color:#e0e0e0;white-space:pre;-webkit-text-stroke:0.1px #e0e0e0;transform-origin:0 0;transform:scaleX(0.950)">13</div>
<div style="position:absolute;left:397.27px;top:443.94px;font:400 6.6px/1 'Liberation Sans',sans-serif;color:#e0e0e0;white-space:pre;-webkit-text-stroke:0.1px #e0e0e0;transform-origin:0 0;transform:scaleX(0.950)">149</div>
<div style="position:absolute;left:480.72px;top:443.94px;font:400 6.6px/1 'Liberation Sans',sans-serif;color:#e0e0e0;white-space:pre;-webkit-text-stroke:0.1px #e0e0e0;transform-origin:0 0;transform:scaleX(0.950)">153</div>
<div style="position:absolute;left:564.17px;top:443.94px;font:400 6.6px/1 'Liberation Sans',sans-serif;color:#e0e0e0;white-space:pre;-webkit-text-stroke:0.1px #e0e0e0;transform-origin:0 0;transform:scaleX(0.950)">157</div>
<div style="position:absolute;left:647.62px;top:443.94px;font:400 6.6px/1 'Liberation Sans',sans-serif;color:#e0e0e0;white-space:pre;-webkit-text-stroke:0.1px #e0e0e0;transform-origin:0 0;transform:scaleX(0.950)">161</div>
<div style="position:absolute;left:731.07px;top:443.94px;font:400 6.6px/1 'Liberation Sans',sans-serif;color:#e0e0e0;white-space:pre;-webkit-text-stroke:0.1px #e0e0e0;transform-origin:0 0;transform:scaleX(0.950)">165</div>
<div style="position:absolute;left:7.21px;top:374.54px;font:400 5.4px/1 'Liberation Sans',sans-serif;color:#e0e0e0;white-space:pre;-webkit-text-stroke:0.1px #e0e0e0;transform-origin:0 0;transform:scaleX(1.050)">-10</div>
<div style="position:absolute;left:784.81px;top:374.54px;font:400 5.4px/1 'Liberation Sans',sans-serif;color:#e0e0e0;white-space:pre;-webkit-text-stroke:0.1px #e0e0e0;transform-origin:0 0;transform:scaleX(1.050)">-10</div>
<div style="position:absolute;left:7.21px;top:381.17px;font:400 5.4px/1 'Liberation Sans',sans-serif;color:#e0e0e0;white-space:pre;-webkit-text-stroke:0.1px #e0e0e0;transform-origin:0 0;transform:scaleX(1.050)">-20</div>
<div style="position:absolute;left:784.81px;top:381.17px;font:400 5.4px/1 'Liberation Sans',sans-serif;color:#e0e0e0;white-space:pre;-webkit-text-stroke:0.1px #e0e0e0;transform-origin:0 0;transform:scaleX(1.050)">-20</div>
<div style="position:absolute;left:7.21px;top:387.80px;font:400 5.4px/1 'Liberation Sans',sans-serif;color:#e0e0e0;white-space:pre;-webkit-text-stroke:0.1px #e0e0e0;transform-origin:0 0;transform:scaleX(1.050)">-30</div>
<div style="position:absolute;left:784.81px;top:387.80px;font:400 5.4px/1 'Liberation Sans',sans-serif;color:#e0e0e0;white-space:pre;-webkit-text-stroke:0.1px #e0e0e0;transform-origin:0 0;transform:scaleX(1.050)">-30</div>
<div style="position:absolute;left:7.21px;top:394.43px;font:400 5.4px/1 'Liberation Sans',sans-serif;color:#e0e0e0;white-space:pre;-webkit-text-stroke:0.1px #e0e0e0;transform-origin:0 0;transform:scaleX(1.050)">-40</div>
<div style="position:absolute;left:784.81px;top:394.43px;font:400 5.4px/1 'Liberation Sans',sans-serif;color:#e0e0e0;white-space:pre;-webkit-text-stroke:0.1px #e0e0e0;transform-origin:0 0;transform:scaleX(1.050)">-40</div>
<div style="position:absolute;left:7.21px;top:401.06px;font:400 5.4px/1 'Liberation Sans',sans-serif;color:#e0e0e0;white-space:pre;-webkit-text-stroke:0.1px #e0e0e0;transform-origin:0 0;transform:scaleX(1.050)">-50</div>
<div style="position:absolute;left:784.81px;top:401.06px;font:400 5.4px/1 'Liberation Sans',sans-serif;color:#e0e0e0;white-space:pre;-webkit-text-stroke:0.1px #e0e0e0;transform-origin:0 0;transform:scaleX(1.050)">-50</div>
<div style="position:absolute;left:7.21px;top:407.69px;font:400 5.4px/1 'Liberation Sans',sans-serif;color:#e0e0e0;white-space:pre;-webkit-text-stroke:0.1px #e0e0e0;transform-origin:0 0;transform:scaleX(1.050)">-60</div>
<div style="position:absolute;left:784.81px;top:407.69px;font:400 5.4px/1 'Liberation Sans',sans-serif;color:#e0e0e0;white-space:pre;-webkit-text-stroke:0.1px #e0e0e0;transform-origin:0 0;transform:scaleX(1.050)">-60</div>
<div style="position:absolute;left:7.21px;top:414.32px;font:400 5.4px/1 'Liberation Sans',sans-serif;color:#e0e0e0;white-space:pre;-webkit-text-stroke:0.1px #e0e0e0;transform-origin:0 0;transform:scaleX(1.050)">-70</div>
<div style="position:absolute;left:784.81px;top:414.32px;font:400 5.4px/1 'Liberation Sans',sans-serif;color:#e0e0e0;white-space:pre;-webkit-text-stroke:0.1px #e0e0e0;transform-origin:0 0;transform:scaleX(1.050)">-70</div>
<div style="position:absolute;left:7.21px;top:420.95px;font:400 5.4px/1 'Liberation Sans',sans-serif;color:#e0e0e0;white-space:pre;-webkit-text-stroke:0.1px #e0e0e0;transform-origin:0 0;transform:scaleX(1.050)">-80</div>
<div style="position:absolute;left:784.81px;top:420.95px;font:400 5.4px/1 'Liberation Sans',sans-serif;color:#e0e0e0;white-space:pre;-webkit-text-stroke:0.1px #e0e0e0;transform-origin:0 0;transform:scaleX(1.050)">-80</div>
<div style="position:absolute;left:7.21px;top:427.58px;font:400 5.4px/1 'Liberation Sans',sans-serif;color:#e0e0e0;white-space:pre;-webkit-text-stroke:0.1px #e0e0e0;transform-origin:0 0;transform:scaleX(1.050)">-90</div>
<div style="position:absolute;left:784.81px;top:427.58px;font:400 5.4px/1 'Liberation Sans',sans-serif;color:#e0e0e0;white-space:pre;-webkit-text-stroke:0.1px #e0e0e0;transform-origin:0 0;transform:scaleX(1.050)">-90</div>
<div style="position:absolute;left:176.20px;top:369.08px;font:400 7.0px/1 'Liberation Sans',sans-serif;color:#f4f4f4;white-space:pre;-webkit-text-stroke:0.1px #f4f4f4;transform-origin:0 0;transform:scaleX(0.969)">4 x ISM</div>
<div style="position:absolute;left:554.25px;top:369.08px;font:400 7.0px/1 'Liberation Sans',sans-serif;color:#f4f4f4;white-space:pre;-webkit-text-stroke:0.1px #f4f4f4;transform-origin:0 0;transform:scaleX(0.987)">1 x UNII-3</div>
</div>
</div>
</body></html>
